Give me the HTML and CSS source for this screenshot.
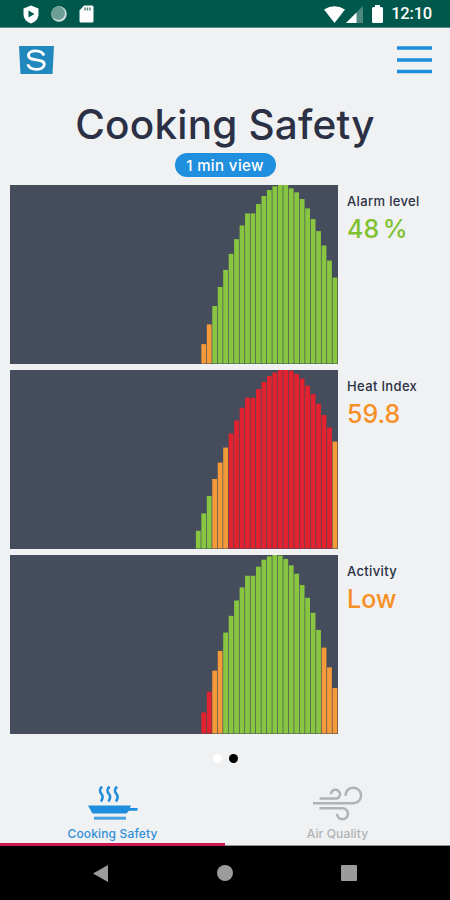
FILE: index.html
```html
<!DOCTYPE html>
<html lang="en">
<head>
  <meta charset="UTF-8" />
  <meta name="viewport" content="width=device-width, initial-scale=1" />
  <title>Cooking Safety</title>
  <link rel="stylesheet" href="styles.css">
</head>
<body>

  <div class="status-bar">
    <div class="status-left">
      <svg width="16" height="19" viewBox="0 0 16 19"><path d="M8 .5 15.500 3.500V9c0 4.500-3 8-7.500 9.500C3.500 17 .5 13.500 .5 9V3.500z" fill="#fff"/><path d="M5.500 5.500v7l6-3.500z" fill="#00574b"/></svg>
      <svg width="16" height="16" viewBox="0 0 16 16"><circle cx="8" cy="8" r="7.700" fill="#d5e4e1"/><circle cx="7.200" cy="7.300" r="6.800" fill="#6d9f96"/></svg>
      <svg width="15" height="18" viewBox="0 0 15 18"><path d="M5 .5h8q1.500 0 1.500 1.500v14q0 1.500-1.500 1.500H2Q.5 17.500 .5 16V5.500z" fill="#fff"/><path d="M6 2.500v3M8.500 2.500v3M11 2.500v3" stroke="#4c8078" stroke-width="1.400"/></svg>
    </div>
    <div class="status-right">
      <svg width="21" height="17" viewBox="0 0 21 17"><path d="M0 3.500Q10.500-3 21 3.500L10.500 17z" fill="#fff"/></svg>
      <svg class="signal" width="17" height="17" viewBox="0 0 17 17"><path d="M0 17 17 0v17z" fill="#4d897f"/><path d="M0 17 10.500 6.500V17z" fill="#fff"/></svg>
      <svg class="battery" width="11" height="18" viewBox="0 0 11 18"><path d="M3 0h5v2h1.500Q11 2 11 3.500v13q0 1.500-1.500 1.500h-8Q0 18 0 16.500v-13Q0 2 1.500 2H3z" fill="#fff"/></svg>
      <span class="clock">12:10</span>
    </div>
  </div>

  <header class="header">
    <svg width="35" height="28" viewBox="0 0 35 28">
      <path d="M0 0h35l-1.500 28H1.500z" fill="#2088bd"/>
      <path d="M25 9.500C23 3.500 9.500 3 9.500 9.500c0 6.300 15.800 2.300 15.800 8.800 0 6.800-14.500 6.500-16.500 0" fill="none" stroke="#fff" stroke-width="2.800"/>
    </svg>
    <svg width="35" height="28" viewBox="0 0 35 28"><path d="M0 2h35M0 14h35M0 25.500h35" stroke="#1e8ddd" stroke-width="3.600"/></svg>
  </header>

  <main class="main">
    <h1 class="title">Cooking Safety</h1>
    <div class="view-badge">1 min view</div>

    <section class="row">
      <svg class="chart" id="alarm" viewBox="0 0 60 534" preserveAspectRatio="none"></svg>
      <div class="reading">
        <div class="label">Alarm level</div>
        <div class="value green">48 %</div>
      </div>
    </section>

    <section class="row">
      <svg class="chart" id="heat" viewBox="0 0 60 534" preserveAspectRatio="none"></svg>
      <div class="reading">
        <div class="label">Heat Index</div>
        <div class="value orange">59.8</div>
      </div>
    </section>

    <section class="row">
      <svg class="chart" id="activity" viewBox="0 0 60 534" preserveAspectRatio="none"></svg>
      <div class="reading">
        <div class="label">Activity</div>
        <div class="value orange">Low</div>
      </div>
    </section>

    <div class="dots">
      <span class="dot"></span>
      <span class="dot active"></span>
    </div>
  </main>

  <nav class="tabs">
    <div class="tab selected">
      <svg width="50" height="36" viewBox="0 0 50 36">
        <path d="M14 .5c-3 3-2.500 5 -.5 7.500s1.500 4.500-.5 7.500M21.500 .5c-3 3-2.500 5 -.5 7.500s1.500 4.500-.5 7.500M29 .5c-3 3-2.500 5 -.5 7.500s1.500 4.500-.5 7.500" fill="none" stroke="#1e8ddd" stroke-width="2.600"/>
        <path d="M0 19.500h43l-1 2.500h7.500v2.700H41L38.500 27.500H4.500z" fill="#1e8ddd"/>
        <path d="M6 32.200h32" stroke="#4aa1e2" stroke-width="3"/>
      </svg>
      <span>Cooking Safety</span>
    </div>
    <div class="tab">
      <svg width="50" height="36" viewBox="0 0 50 36">
        <g fill="none" stroke="#b0b2b4" stroke-width="2.500">
          <path d="M0 17.200h41a7.800 7.800 0 1 0-8.500-7.500"/>
          <path d="M6.500 12.400h17.500a4.500 4.500 0 1 0-6-4.200"/>
          <path d="M6.500 22.200H29.500a5.500 5.500 0 1 1-5.500 5.500"/>
        </g>
      </svg>
      <span>Air Quality</span>
    </div>
  </nav>

  <div class="nav-bar">
    <svg width="15" height="17" viewBox="0 0 15 17"><path d="M0 8.500 15 0v17z" fill="#9b9b9b"/></svg>
    <svg width="16" height="16" viewBox="0 0 16 16"><circle cx="8" cy="8" r="8" fill="#9b9b9b"/></svg>
    <svg width="16" height="16" viewBox="0 0 16 16"><rect width="16" height="16" rx="1" fill="#9b9b9b"/></svg>
  </div>

  <script src="charts.js"></script>
</body>
</html>
```
FILE: styles.css
```css
* {
  box-sizing: border-box;
}

body {
  margin: 0;
  width: 450px;
  height: 900px;
  display: flex;
  flex-direction: column;
  overflow: hidden;
  background-color: #eff1f3;
  color: #2b3044;
  font-family: Inter, "Liberation Sans", sans-serif;
}

svg {
  display: block;
  flex: none;
}

/* Android status bar */
.status-bar {
  height: 28px;
  padding: 1px 18px 0 23px;
  display: flex;
  justify-content: space-between;
  align-items: center;
  background-color: #00574b;
  border-bottom: 1px solid #5d8f88;
}

.status-left {
  display: flex;
  align-items: center;
  gap: 12px;
}

.status-right {
  display: flex;
  align-items: center;
}

.signal {
  margin-left: 1px;
}

.battery {
  margin-left: 9px;
}

.clock {
  margin-left: 8px;
  color: #fff;
  font: 500 16.500px/20px Roboto, sans-serif;
  letter-spacing: -0.2px;
}

.header {
  height: 74px;
  padding: 18px 18px 0 19px;
  display: flex;
  justify-content: space-between;
}

.main {
  display: flex;
  flex-direction: column;
}

.title {
  margin: 0;
  height: 51px;
  text-align: center;
  font-size: 40.500px;
  line-height: 46px;
  font-weight: 500;
  letter-spacing: 0.2px;
}

.view-badge {
  align-self: center;
  width: 101px;
  height: 24px;
  margin-bottom: 8px;
  border-radius: 12px;
  background-color: #1f8fde;
  color: #fff;
  text-align: center;
  font-size: 15px;
  line-height: 26px;
  font-weight: 500;
  letter-spacing: 0.4px;
}

/* Chart rows */
.row {
  height: 179px;
  margin: 0 0 6px 10px;
  display: flex;
}

.chart {
  width: 328px;
  height: 178.500px;
  background-color: #454c5b;
}

.reading {
  padding: 8px 0 0 9px;
}

.label {
  font-size: 13px;
  line-height: 16px;
  font-weight: 500;
  letter-spacing: 0.35px;
}

.value {
  margin-top: 4px;
  font-size: 25px;
  line-height: 32px;
  font-weight: 500;
  word-spacing: -3px;
}

.green {
  color: #80c12f;
}

.orange {
  color: #f78f24;
}

.dots {
  padding-top: 14px;
  display: flex;
  justify-content: center;
  gap: 7px;
}

.dot {
  width: 9px;
  height: 9px;
  border-radius: 50%;
  background-color: #fff;
}

.dot.active {
  background-color: #000;
}

/* Bottom tabs */
.tabs {
  margin-top: auto;
  height: 60px;
  display: flex;
}

.tab {
  width: 50%;
  display: flex;
  flex-direction: column;
  align-items: center;
  gap: 5px;
  color: #b0b2b4;
  font-size: 12px;
  line-height: 14px;
  font-weight: 500;
  letter-spacing: 0.15px;
  border-bottom: 1px solid #8d8f90;
}

.tab.selected {
  color: #338fd5;
  border-bottom: 3px solid #d01850;
}

/* Android navigation bar */
.nav-bar {
  height: 54px;
  padding: 0 93px 0 93px;
  display: flex;
  align-items: center;
  justify-content: space-between;
  background-color: #000;
}
```
FILE: charts.js
```js
const GREEN = '#88c540';
const ORANGE = '#f49a38';
const RED = '#e2222f';
const SLOTS = 60;
const MAX = 534;

// each run: color, bar heights; the last bar sits on the right edge
const charts = {
  alarm: [
    [ORANGE, [58, 117]],
    [GREEN, [172, 229, 280, 328, 372, 413, 449, 449, 477, 501, 519, 530, 534, 534, 524, 512, 492, 464, 432, 396, 353, 308, 257]]
  ],
  heat: [
    [GREEN, [53, 105, 157]],
    [ORANGE, [208, 257, 302]],
    [RED, [344, 383, 421, 451, 451, 477, 498, 516, 526, 534, 534, 532, 522, 508, 487, 462, 433, 399, 362]],
    [ORANGE, [320]]
  ],
  activity: [
    [RED, [63, 125]],
    [ORANGE, [188, 247]],
    [GREEN, [302, 352, 398, 437, 472, 472, 499, 520, 530, 534, 532, 522, 503, 478, 444, 406, 361, 310]],
    [ORANGE, [257, 198, 136]]
  ]
};

Object.keys(charts).forEach(function(id) {
  const svg = document.getElementById(id);
  const bars = charts[id].flatMap(([color, heights]) => heights.map(h => ({ color, h })));

  bars.forEach(function(bar, i) {
    const rect = document.createElementNS('http://www.w3.org/2000/svg', 'rect');
    rect.setAttribute('x', SLOTS - bars.length + i);
    rect.setAttribute('y', MAX - bar.h);
    rect.setAttribute('width', 0.88);
    rect.setAttribute('height', bar.h);
    rect.setAttribute('fill', bar.color);
    svg.appendChild(rect);
  });
});
```
